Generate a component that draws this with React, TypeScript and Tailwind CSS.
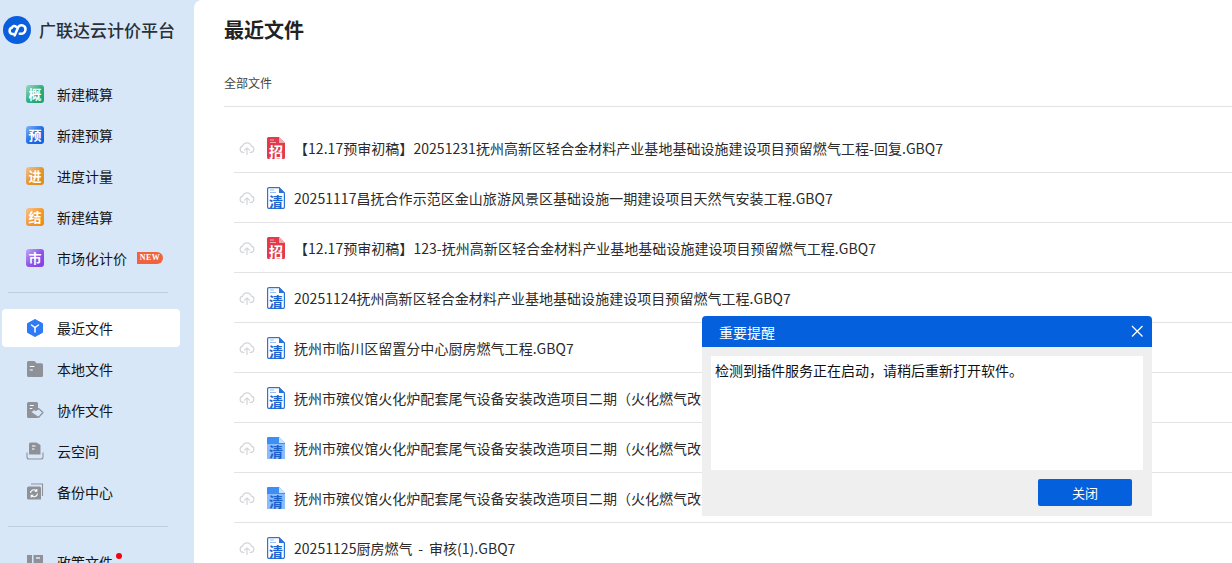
const topItems = [
  { label: '新建概算', char: '概', color: 'from-[#9ad8c0] via-[#2fae7f] to-[#15a06c]' },
  { label: '新建预算', char: '预', color: 'from-[#83b2f7] via-[#1f6fe8] to-[#0b5fe3]' },
  { label: '进度计量', char: '进', color: 'from-[#f0c58e] via-[#e2962f] to-[#df8a1c]' },
  { label: '新建结算', char: '结', color: 'from-[#f8c48a] via-[#f29a2e] to-[#f0890f]' },
  { label: '市场化计价', char: '市', color: 'from-[#c8a6f5] via-[#8f55ea] to-[#7d3fe4]' },
];

const files = [
  { kind: 'zhao', name: '【12.17预审初稿】20251231抚州高新区轻合金材料产业基地基础设施建设项目预留燃气工程-回复.GBQ7' },
  { kind: 'qing', name: '20251117昌抚合作示范区金山旅游风景区基础设施一期建设项目天然气安装工程.GBQ7' },
  { kind: 'zhao', name: '【12.17预审初稿】123-抚州高新区轻合金材料产业基地基础设施建设项目预留燃气工程.GBQ7' },
  { kind: 'qing', name: '20251124抚州高新区轻合金材料产业基地基础设施建设项目预留燃气工程.GBQ7' },
  { kind: 'qing', name: '抚州市临川区留置分中心厨房燃气工程.GBQ7' },
  { kind: 'qing', name: '抚州市殡仪馆火化炉配套尾气设备安装改造项目二期（火化燃气改造）.GBQ7' },
  { kind: 'solid', name: '抚州市殡仪馆火化炉配套尾气设备安装改造项目二期（火化燃气改造）.GBQ7' },
  { kind: 'solid', name: '抚州市殡仪馆火化炉配套尾气设备安装改造项目二期（火化燃气改造）.GBQ7' },
  { kind: 'qing', name: '20251125厨房燃气 - 审核(1).GBQ7' },
];

function Logo() {
  return (
    <svg width="28" height="28" viewBox="0 0 28 28" className="shrink-0">
      <circle cx="14" cy="14" r="14" fill="#0a5fdc" />
      <path
        d="M13.2 10.800 C11.800 9.400 9.400 9.800 8.800 11.800 C6.200 12.400 5.600 16.600 8.600 17.800 C9 17.950 9.500 18 10 18 M11.600 19.400 L15.400 10.800 C16.800 8.800 20 8.800 21.600 10.600 C23.600 13 22 17.800 18.400 17.800 L16.800 17.800"
        fill="none"
        stroke="#fff"
        strokeWidth="2.500"
        strokeLinecap="round"
      />
    </svg>
  );
}

function RecentIcon() {
  return (
    <svg width="18" height="18" viewBox="0 0 18 18">
      <path d="M9 .5 16.500 4.600v8.800L9 17.500 1.500 13.400V4.600z" fill="#2f7bf5" stroke="#2f7bf5" strokeLinejoin="round" />
      <path d="M5.500 6 9 8.600 12.500 6M9 8.600V13" fill="none" stroke="#fff" strokeWidth="1.500" strokeLinecap="round" />
    </svg>
  );
}

function LocalIcon() {
  return (
    <svg width="18" height="18" viewBox="0 0 18 18">
      <path d="M1 2.500A1.500 1.500 0 0 1 2.500 1h6L10.500 3.200h5A1.500 1.500 0 0 1 17 4.700v11A1.500 1.500 0 0 1 15.500 17h-13A1.500 1.500 0 0 1 1 15.500z" fill="#8e9298" />
      <path d="M3.800 6.500h4.600M3.800 10h3" stroke="#fff" strokeWidth="1.200" />
    </svg>
  );
}

function ShareIcon() {
  return (
    <svg width="18" height="18" viewBox="0 0 18 18">
      <path d="M1 2.500A1.500 1.500 0 0 1 2.500 1h8A1.500 1.500 0 0 1 12 2.500V8h2v6l-3 3H2.500A1.500 1.500 0 0 1 1 15.500z" fill="#8e9298" />
      <path d="M3.800 4.500h4M3.800 7.500h2.500" stroke="#fff" strokeWidth="1.200" />
      <path d="M12.500 7.500 17 11.500 12.500 16.500 8 13.500 4.500 11 8 8.500 10 9.500z" fill="#d8e7f8" stroke="#8e9298" strokeWidth="1.200" strokeLinejoin="round" />
    </svg>
  );
}

function CloudIcon() {
  return (
    <svg width="18" height="18" viewBox="0 0 18 18">
      <path d="M3 2a1.500 1.500 0 0 1 1.500-1.500h6L14.500 3v9.500h-11.500z" fill="#8e9298" />
      <path d="M6 4h3.500M6 7h2.500" stroke="#fff" strokeWidth="1.200" />
      <path d="M1 10.500v4.500a2 2 0 0 0 2 2h12a2 2 0 0 0 2-2v-4.500" fill="none" stroke="#8e9298" strokeWidth="1.100" />
    </svg>
  );
}

function BackupIcon() {
  return (
    <svg width="18" height="18" viewBox="0 0 18 18">
      <path d="M5 1h11.500v12" fill="none" stroke="#8e9298" strokeWidth="1.100" />
      <path d="M1 5a1.500 1.500 0 0 1 1.500-1.500h11A1.500 1.500 0 0 1 15 5v11.500H2.500A1.500 1.500 0 0 1 1 15z" fill="#8e9298" />
      <path d="M4.500 10a3.500 3.500 0 0 1 6-2.200M11.500 10.500a3.500 3.500 0 0 1-6 2.200M10.800 6v2.200H8.600M5.200 14.500v-2.200h2.200" fill="none" stroke="#fff" strokeWidth="1.100" />
    </svg>
  );
}

function PolicyIcon() {
  return (
    <svg width="18" height="18" viewBox="0 0 18 18">
      <path d="M1 2h5v14H1zM7.500 2H17v14H7.500z" fill="#8e9298" />
      <path d="M10 5h4" stroke="#fff" strokeWidth="1.200" />
    </svg>
  );
}

function UploadIcon() {
  return (
    <svg width="16" height="14" viewBox="0 0 16 14" className="shrink-0" fill="none" stroke="#d3d5d8" strokeWidth="1.200">
      <path d="M4.800 11.400H4A3.200 3.200 0 0 1 3.600 5.100 4.600 4.600 0 0 1 12.400 5.100 3.200 3.200 0 0 1 12 11.400H11.200" strokeLinecap="round" />
      <path d="M8 13.500V7M5.600 9.200 8 6.800l2.400 2.400" strokeLinecap="round" strokeLinejoin="round" />
    </svg>
  );
}

function FileShape({ kind }: { kind: string }) {
  if (kind === 'zhao') {
    return (
      <svg width="18" height="22" viewBox="0 0 18 22">
        <path d="M1.500 0H12l6 6v14.500a1.500 1.500 0 0 1-1.500 1.500h-15A1.500 1.500 0 0 1 0 20.500v-19A1.500 1.500 0 0 1 1.500 0z" fill="#e13b4c" />
        <path d="M12 0l6 6h-6z" fill="#f2a9b0" />
        <path d="M3 3h4M3 5.500h6" stroke="#f5b4ba" strokeWidth="0.900" />
      </svg>
    );
  }
  if (kind === 'solid') {
    return (
      <svg width="18" height="22" viewBox="0 0 18 22">
        <path d="M0 7h18v15H0z" fill="#8bbcfd" />
        <path d="M0 1a1 1 0 0 1 1-1h11l6 6v1H0z" fill="#3d8ff6" />
        <path d="M12 0l6 6h-6z" fill="#cfe5fb" />
      </svg>
    );
  }
  return (
    <svg width="18" height="22" viewBox="0 0 18 22">
      <path d="M2 .6h10L17.400 6v14a1.400 1.400 0 0 1-1.400 1.400H2A1.400 1.400 0 0 1 .6 20V2A1.400 1.400 0 0 1 2 .6z" fill="#fff" stroke="#2a73dc" strokeWidth="1.200" />
      <path d="M12 0l6 6h-6z" fill="#2a73dc" />
      <path d="M3 3h4M3 5.500h6" stroke="#8db6ee" strokeWidth="0.900" />
    </svg>
  );
}

function FileIcon({ kind }: { kind: string }) {
  return (
    <span className="relative block h-[22px] w-[18px] shrink-0">
      <FileShape kind={kind} />
      {kind === 'zhao' && <span className="absolute bottom-[1px] left-0 w-full text-center text-[14px] font-bold leading-[14px] text-white">招</span>}
      {kind === 'qing' && <span className="absolute bottom-[1px] left-0 w-full text-center text-[14px] font-bold leading-[14px] text-[#1b66d2]">清</span>}
      {kind === 'solid' && <span className="absolute bottom-[1px] left-0 w-full text-center text-[14px] font-bold leading-[14px] text-[#1b63cb]">清</span>}
    </span>
  );
}

export default function App() {
  return (
    <div className="relative flex h-[563px] w-[1232px] overflow-hidden bg-[#d8e7f8] font-['Noto_Sans_CJK_SC','Liberation_Sans',sans-serif] text-[14px] text-[#141414]">
      {/* sidebar */}
      <aside className="h-full w-[194px] shrink-0 overflow-hidden">
        <div className="flex h-[75px] items-start pl-[3px] pt-[16px]">
          <Logo />
          <span className="ml-[8px] text-[17px] font-medium leading-[28px] text-[#2b2f36]">广联达云计价平台</span>
        </div>
        <nav className="flex flex-col gap-[3px]">
          {topItems.map((item, i) => (
            <div key={item.label} className="ml-[2px] flex h-[38px] w-[178px] items-center pl-[24px]">
              <span className={`flex h-[18px] w-[18px] items-center justify-center rounded-[3px] bg-gradient-to-br ${item.color} text-[13px] font-bold text-white`}>
                {item.char}
              </span>
              <span className="ml-[13px]">{item.label}</span>
              {i === 4 && (
                <span className="ml-[10px] flex h-[12px] w-[26px] items-center justify-center rounded-l-[5px] rounded-r-full bg-[#f1633f] font-['Liberation_Serif',serif] text-[8px] font-bold tracking-[0.5px] text-white">
                  NEW
                </span>
              )}
            </div>
          ))}
        </nav>
        <div className="ml-[8px] mt-[15px] h-px w-[160px] bg-[#bfd0e2]" />
        <nav className="mt-[16px] flex flex-col gap-[3px]">
          <div className="ml-[2px] flex h-[38px] w-[178px] items-center rounded-[4px] bg-white pl-[24px]">
            <RecentIcon />
            <span className="ml-[13px]">最近文件</span>
          </div>
          <div className="ml-[2px] flex h-[38px] w-[178px] items-center pl-[24px]">
            <LocalIcon />
            <span className="ml-[13px]">本地文件</span>
          </div>
          <div className="ml-[2px] flex h-[38px] w-[178px] items-center pl-[24px]">
            <ShareIcon />
            <span className="ml-[13px]">协作文件</span>
          </div>
          <div className="ml-[2px] flex h-[38px] w-[178px] items-center pl-[24px]">
            <CloudIcon />
            <span className="ml-[13px]">云空间</span>
          </div>
          <div className="ml-[2px] flex h-[38px] w-[178px] items-center pl-[24px]">
            <BackupIcon />
            <span className="ml-[13px]">备份中心</span>
          </div>
        </nav>
        <div className="ml-[8px] mt-[15px] h-px w-[160px] bg-[#bfd0e2]" />
        <div className="ml-[2px] mt-[16px] flex h-[38px] w-[178px] items-center pl-[24px]">
          <PolicyIcon />
          <span className="relative ml-[13px]">
            政策文件
            <span className="absolute right-[-9px] top-[1px] h-[6px] w-[6px] rounded-full bg-[#f5000f]" />
          </span>
        </div>
      </aside>

      {/* main */}
      <main className="h-full min-w-0 flex-1 overflow-hidden rounded-tl-[8px] bg-white pl-[30px] pt-[16px]">
        <h1 className="text-[20px] font-bold leading-[28px] text-[#222]">最近文件</h1>
        <div className="mt-[31px] border-b border-[#e3e3e6] pb-[15px] text-[12px] leading-[16px] text-[#444]">全部文件</div>
        <ul className="ml-[10px] mt-[16px]">
          {files.map((file, i) => (
            <li key={i} className="flex h-[50px] items-center border-b border-[#e3e3e6] pl-[5px]">
              <UploadIcon />
              <span className="ml-[12px] flex">
                <FileIcon kind={file.kind} />
              </span>
              <span className="ml-[9px] whitespace-nowrap pt-[2px] tracking-[0.04px] text-[#2b2b2b] [word-spacing:2.5px]">{file.name}</span>
            </li>
          ))}
        </ul>
      </main>

      {/* dialog */}
      <div className="absolute left-[702px] top-[316px] flex h-[200px] w-[450px] flex-col overflow-hidden rounded-t-[4px] bg-[#efefef]">
        <div className="flex h-[31px] items-center justify-between bg-[#0560de] pl-[17px] pr-[8px] text-white">
          <span className="pt-[2px]">重要提醒</span>
          <svg width="14" height="14" viewBox="0 0 14 14" fill="none" stroke="#fff" strokeWidth="1.300" className="-mt-[1px]">
            <path d="M2 2l10.500 10.500M12.500 2 2 12.500" />
          </svg>
        </div>
        <div className="mx-[9px] mt-[9px] h-[114px] bg-white px-[4px] pt-[4px] leading-[20px] text-[#111]">
          检测到插件服务正在启动，请稍后重新打开软件。
        </div>
        <div className="mr-[20px] mt-[9px] flex justify-end">
          <button className="h-[27px] w-[94px] rounded-[2px] bg-[#0560de] text-[13px] text-white">关闭</button>
        </div>
      </div>
    </div>
  );
}
